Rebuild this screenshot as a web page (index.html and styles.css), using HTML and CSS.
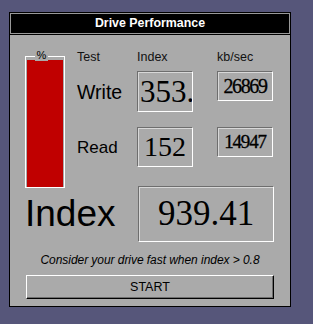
FILE: index.html
```html
<!DOCTYPE html>
<html lang="en">
<head>
    <meta charset="UTF-8">
    <title>Drive Performance</title>
    <link rel="stylesheet" href="styles.css">
</head>
<body>
<div class="window">
    <div class="titlewrap"><div class="title">Drive Performance</div></div>
    <div class="content">
        <div class="stats">
            <div class="meter">
                <span class="meter-label">%</span>
                <div class="meter-fill"></div>
            </div>
            <div class="head">Test</div>
            <div class="head">Index</div>
            <div class="head">kb/sec</div>

            <div class="test write">Write</div>
            <div class="box idx big"><span>353.</span></div>
            <div class="box kb"><span>26869</span></div>

            <div class="test read">Read</div>
            <div class="box idx"><span>152</span></div>
            <div class="box kb small"><span>14947</span></div>
        </div>
        <div class="index-row">
            <div class="index-label">Index</div>
            <div class="box total"><span>939.41</span></div>
        </div>
        <div class="hint">Consider your drive fast when index &gt; 0.8</div>
        <button class="start">START</button>
    </div>
</div>
</body>
</html>
```

FILE: styles.css
```css
body {
    margin: 0;
    background: #56567a;
    font-family: "Liberation Sans", Arial, sans-serif;
}
.window {
    margin: 12px 0 0 9px;
    width: 280px;
    border: 1px solid #000;
    background: #aaaaaa;
}
.titlewrap {
    border-bottom: 1px solid #000;
}
.title {
    height: 19px;
    border: 1px solid #999;
    background: #000;
    color: #fff;
    font-weight: bold;
    font-size: 12.4px;
    line-height: 19px;
    text-align: center;
}
.content {
    padding: 15px 0 7px 0;
}
.stats {
    display: grid;
    grid-template-columns: 52px 60px 80px 56px;
    grid-template-rows: 21px 56px 59px;
    padding-left: 15px;
    align-items: start;
}
.meter {
    grid-row: 1 / 4;
    position: relative;
    margin-top: 6px;
    border: 1px solid #fff;
    padding: 3px 1px 0 1px;
    box-sizing: border-box;
    width: 40px;
    height: 132px;
}
.meter-label {
    position: absolute;
    top: -8px;
    left: 9px;
    width: 13px;
    background: #aaaaaa;
    font-size: 11px;
    line-height: 12px;
    text-align: center;
    color: #000;
}
.meter-fill {
    height: 100%;
    background: #c00000;
}
.head {
    font-size: 12.5px;
    line-height: 14px;
    color: #111;
}
.test {
    color: #000;
}
.write {
    font-size: 19.5px;
    line-height: 24px;
    margin-top: 9px;
}
.read {
    font-size: 17px;
    line-height: 20px;
    margin-top: 11px;
}
.box {
    box-sizing: border-box;
    border: 1px solid;
    border-color: #6e6e6e #fff #fff #6e6e6e;
    box-shadow: inset 1px 1px 0 #d8d8d8;
    display: flex;
    align-items: center;
    justify-content: center;
    overflow: hidden;
    white-space: nowrap;
    font-family: "Liberation Serif", "Times New Roman", serif;
    color: #000;
}
.idx {
    width: 56px;
    height: 40px;
    font-size: 28px;
}
.idx.big {
    height: 41px;
    font-size: 31px;
    justify-content: flex-start;
    padding-left: 2px;
}
.kb {
    width: 56px;
    height: 30px;
    font-size: 20px;
    letter-spacing: -1.4px;
    -webkit-text-stroke: 0.3px #000;
}
.kb.small {
    font-size: 19px;
    letter-spacing: -1.2px;
}
.index-row {
    display: flex;
    align-items: center;
    padding-left: 15px;
    height: 56px;
}
.index-label {
    font-size: 37px;
    color: #000;
}
.total {
    margin-left: auto;
    margin-right: 16px;
    width: 136px;
    height: 56px;
    font-size: 35px;
}
.hint {
    margin-top: 11px;
    font-size: 12px;
    line-height: 14px;
    font-style: italic;
    letter-spacing: -0.05px;
    text-align: center;
    color: #000;
}
.start {
    display: block;
    margin: 8px 16px 0 16px;
    width: 248px;
    height: 24px;
    padding: 0;
    background: #aaaaaa;
    border: 1px solid;
    border-color: #fff #000 #000 #fff;
    box-shadow: inset -1px -1px 0 #6e6e6e;
    font-family: "Liberation Sans", Arial, sans-serif;
    font-size: 12.5px;
    color: #000;
}
```
